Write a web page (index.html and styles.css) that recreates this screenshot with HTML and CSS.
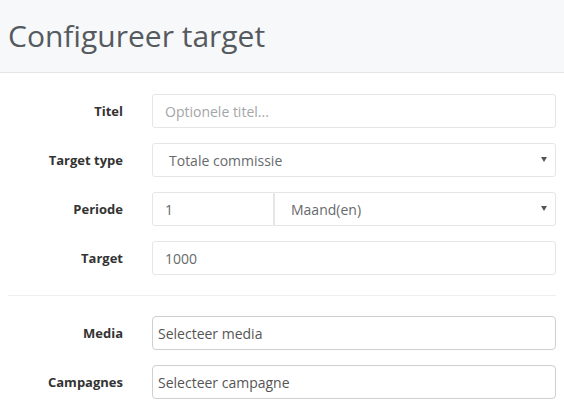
FILE: index.html
```html
<!DOCTYPE html>
<html lang="nl">
<head>
<meta charset="utf-8">
<title>Configureer target</title>
<link rel="stylesheet" href="styles.css">
</head>
<body>
<header class="page-header">
  <h1 class="page-title">Configureer target</h1>
</header>
<main class="form">
  <div class="row">
    <label class="label">Titel</label>
    <div class="control"><span class="placeholder">Optionele titel...</span></div>
  </div>
  <div class="row">
    <label class="label">Target type</label>
    <div class="control select"><span class="value">Totale commissie</span><svg class="caret" width="6" height="5" viewBox="0 0 6 5"><path d="M0 0H6L3 5Z" fill="#555"/></svg></div>
  </div>
  <div class="row">
    <label class="label">Periode</label>
    <div class="group">
      <div class="control num"><span>1</span></div>
      <div class="control select unit"><span class="value">Maand(en)</span><svg class="caret" width="6" height="5" viewBox="0 0 6 5"><path d="M0 0H6L3 5Z" fill="#555"/></svg></div>
    </div>
  </div>
  <div class="row">
    <label class="label">Target</label>
    <div class="control"><span>1000</span></div>
  </div>
  <hr class="divider">
  <div class="row">
    <label class="label">Media</label>
    <div class="control s2"><span>Selecteer media</span></div>
  </div>
  <div class="row">
    <label class="label">Campagnes</label>
    <div class="control s2"><span>Selecteer campagne</span></div>
  </div>
</main>
</body>
</html>
```

FILE: styles.css
```css
* { box-sizing: border-box; }
html, body { margin: 0; padding: 0; background: #fff; }
body { font-family: "Open Sans", "Liberation Sans", sans-serif; color: #676a6c; }

.page-header {
  background: #f7f8fa;
  height: 73px;
  border-bottom: 1px solid #e4e6e8;
  padding: 0 8px;
  display: flex;
  align-items: center;
}
.page-title {
  margin: 0;
  font-size: 30px;
  font-weight: 400;
  color: #555a5f;
  letter-spacing: 0;
  line-height: 1;
  padding-bottom: 1px;
}

.form {
  padding: 21px 8px 0 8px;
  display: flex;
  flex-direction: column;
}
.row {
  display: grid;
  grid-template-columns: 115px 1fr;
  column-gap: 29px;
  align-items: center;
  margin-bottom: 15px;
}
.label {
  text-align: right;
  font-size: 13px;
  font-weight: 700;
  color: #333;
}
.control {
  height: 34px;
  border: 1px solid #e5e6e7;
  border-radius: 3px;
  display: flex;
  align-items: center;
  padding: 0 12px;
  font-size: 14px;
  color: #676a6c;
  background: #fff;
}
.placeholder { color: #a3a5a7; }
.select { padding: 0 8px 0 16px; }
.select .caret { margin-left: auto; margin-bottom: 2px; }

.group { display: flex; }
.group .num { width: 122px; border-radius: 3px 0 0 3px; }
.group .unit { flex: 1; border-radius: 0 3px 3px 0; border-left: 1px solid #e5e6e7; }

.divider {
  border: 0;
  border-top: 1px solid #eeeeee;
  margin: 5px 0 20px 0;
  height: 0;
}

.s2 {
  border-color: #cfcfcf;
  padding: 0 5px;
  color: #555;
  border-radius: 4px;
}
```
